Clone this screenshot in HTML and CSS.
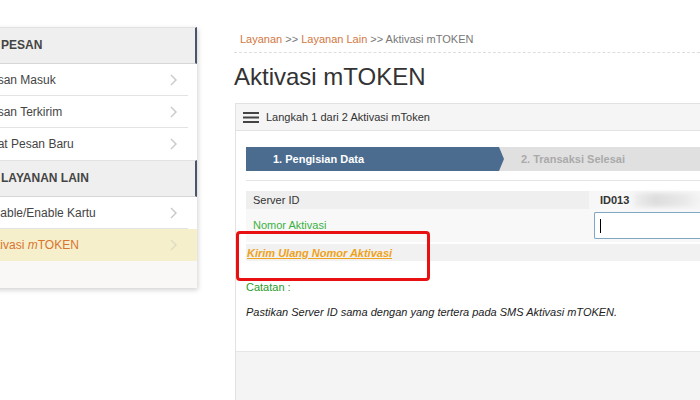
FILE: index.html
```html
<!DOCTYPE html>
<html lang="id">
<head>
    <meta charset="UTF-8">
    <title>Aktivasi mTOKEN</title>
    <link rel="stylesheet" href="styles.css">
</head>
<body>
    <div class="page">
        <div class="sidebar">
            <div class="menu-head">PESAN</div>
            <a class="menu-item" href="#"><span>Pesan Masuk</span><svg class="chev" width="7" height="12" viewBox="0 0 7 12"><path d="M1 1l5 5-5 5" fill="none" stroke="#c8c8c8" stroke-width="1.4"/></svg></a>
            <a class="menu-item" href="#"><span>Pesan Terkirim</span><svg class="chev" width="7" height="12" viewBox="0 0 7 12"><path d="M1 1l5 5-5 5" fill="none" stroke="#c8c8c8" stroke-width="1.4"/></svg></a>
            <a class="menu-item last" href="#"><span>Buat Pesan Baru</span><svg class="chev" width="7" height="12" viewBox="0 0 7 12"><path d="M1 1l5 5-5 5" fill="none" stroke="#c8c8c8" stroke-width="1.4"/></svg></a>
            <div class="menu-head">LAYANAN LAIN</div>
            <a class="menu-item" href="#"><span>Disable/Enable Kartu</span><svg class="chev" width="7" height="12" viewBox="0 0 7 12"><path d="M1 1l5 5-5 5" fill="none" stroke="#c8c8c8" stroke-width="1.4"/></svg></a>
            <a class="menu-item active last" href="#"><span>Aktivasi <i>m</i>TOKEN</span><svg class="chev" width="7" height="12" viewBox="0 0 7 12"><path d="M1 1l5 5-5 5" fill="none" stroke="#e0dcc4" stroke-width="1.4"/></svg></a>
            <div class="menu-foot"></div>
        </div>

        <div class="main">
            <div class="crumb">
                <a href="#">Layanan</a> &gt;&gt; <a href="#">Layanan Lain</a> &gt;&gt; Aktivasi mTOKEN
            </div>
            <h1 class="title">Aktivasi mTOKEN</h1>

            <div class="panel">
                <div class="panel-head">
                    <svg width="16" height="11" viewBox="0 0 16 11"><rect y="0" width="16" height="2" fill="#444"/><rect y="4.5" width="16" height="2" fill="#444"/><rect y="9" width="16" height="2" fill="#444"/></svg>
                    <span>Langkah 1 dari 2 Aktivasi mToken</span>
                </div>
                <div class="panel-body">
                    <div class="steps">
                        <div class="step current">1. Pengisian Data</div>
                        <div class="step">2. Transaksi Selesai</div>
                    </div>
                    <div class="form">
                        <div class="row row-dark">
                            <div class="label">Server ID</div>
                            <div class="value"><b>ID013</b><span class="blur"></span></div>
                        </div>
                        <div class="row row-light">
                            <div class="label green">Nomor Aktivasi</div>
                            <div class="value"><div class="field"><span class="caret"></span></div></div>
                        </div>
                        <div class="row row-link">
                            <a class="resend" href="#">Kirim Ulang Nomor Aktivasi</a>
                        </div>
                    </div>
                    <div class="note-title">Catatan :</div>
                    <div class="note">Pastikan Server ID sama dengan yang tertera pada SMS Aktivasi mTOKEN.</div>
                    <div class="highlight"></div>
                </div>
                <div class="panel-foot"></div>
            </div>
        </div>
    </div>
</body>
</html>
```

FILE: styles.css
```css
html, body {
    margin: 0;
    height: 100%;
    overflow: hidden;
}
body {
    font-family: Arial, "Liberation Sans", sans-serif;
    background-color: #fff;
    color: #333;
}
a {
    text-decoration: none;
}
.page {
    display: flex;
    align-items: flex-start;
}

/* menu kiri */
.sidebar {
    width: 217px;
    margin-left: -20px;
    margin-top: 27px;
    background-color: #fff;
    box-shadow: 1px 2px 5px rgba(0,0,0,0.18);
    display: flex;
    flex-direction: column;
}
.menu-head {
    height: 35px;
    line-height: 35px;
    padding-left: 21px;
    background-color: #efefef;
    border-top: 1px solid #e2e2e2;
    border-bottom: 1px solid #d6d6d6;
    border-right: 2px solid #4a5568;
    font-size: 12px;
    font-weight: bold;
    color: #444;
}
.menu-item {
    display: flex;
    align-items: center;
    justify-content: space-between;
    height: 31px;
    margin-right: 9px;
    padding-left: 3px;
    padding-right: 11px;
    border-bottom: 1px solid #e3e3e3;
    font-size: 12px;
    color: #444;
}
.menu-item.last {
    border-bottom: none;
    height: 32px;
}
.menu-item.active {
    background-color: #f6efcc;
    color: #d9752c;
    margin-right: 0;
    padding-right: 20px;
}
.chev {
    display: block;
}
.menu-foot {
    height: 27px;
    background-color: #faf8f7;
}

/* konten */
.main {
    flex: 1;
    margin-left: 37px;
    min-width: 0;
}
.crumb {
    margin-top: 33px;
    padding-left: 6px;
    padding-bottom: 7px;
    border-bottom: 1px dashed #dedede;
    font-size: 11px;
    color: #777;
}
.crumb a {
    color: #d2773f;
}
.title {
    margin: 10px 0 0 0;
    font-size: 24px;
    font-weight: normal;
    color: #333;
    line-height: 28px;
}
.panel {
    margin-top: 12px;
    margin-left: 1px;
    border: 1px solid #e2e2e2;
    border-right: none;
}
.panel-head {
    display: flex;
    align-items: center;
    gap: 7px;
    height: 26px;
    padding-left: 7px;
    background-color: #f5f5f5;
    border-bottom: 1px solid #e2e2e2;
    font-size: 11px;
    color: #333;
}
.panel-body {
    position: relative;
    padding: 16px 0 0 10px;
    height: 204px;
    background-color: #fff;
    border-bottom: 1px solid #e6e6e6;
}
.steps {
    display: flex;
    height: 24px;
    padding-bottom: 9px;
    border-bottom: 1px solid #e4e4e4;
}
.step {
    flex: 1;
    display: flex;
    align-items: center;
    background-color: #e0e0e0;
    font-size: 11px;
    font-weight: bold;
    color: #aaa;
}
.step.current {
    flex: 0 0 258px;
    padding-left: 27px;
    box-sizing: border-box;
    background-color: #4b6c8f;
    color: #fff;
    clip-path: polygon(0 0, calc(100% - 5px) 0, 100% 50%, calc(100% - 5px) 100%, 0 100%);
    margin-right: -6px;
    position: relative;
    z-index: 1;
}
.step.current + .step {
    padding-left: 23px;
}
.form {
    margin-top: 10px;
}
.row {
    display: flex;
    font-size: 11px;
}
.row-dark {
    height: 18px;
}
.row-dark .label {
    background-color: #efefef;
}
.row-light {
    height: 33px;
    background-color: #f8f8f8;
}
.label {
    flex: 0 0 336px;
    display: flex;
    align-items: center;
    padding-left: 7px;
    color: #333;
}
.label.green {
    color: #3cb043;
    align-items: flex-start;
    padding-top: 10px;
}
.value {
    flex: 1;
    display: flex;
    align-items: center;
    padding-left: 11px;
}
.row-dark .value {
    background-color: #f7f7f7;
    color: #333;
}
.blur {
    display: block;
    width: 70px;
    height: 14px;
    margin-left: 5px;
    background: linear-gradient(90deg, #eee, #ddd 30%, #e8e8e8 70%, #f7f7f7);
    filter: blur(2px);
}
.row-light .value {
    padding-left: 5px;
}
.field {
    flex: 1;
    display: flex;
    align-items: center;
    height: 27px;
    padding-left: 5px;
    box-sizing: border-box;
    border: 1px solid #7fa6c2;
    border-right: none;
    border-radius: 2px 0 0 2px;
    background-color: #fff;
}
.caret {
    display: block;
    width: 1px;
    height: 14px;
    background-color: #000;
}
.row-link {
    height: 17px;
    margin-top: 2px;
    align-items: center;
    background-color: #f1f1f1;
}
.resend {
    padding-left: 1px;
    font-weight: bold;
    font-style: italic;
    text-decoration: underline;
    color: #eea21b;
}
.note-title {
    margin-top: 20px;
    font-size: 11px;
    color: #2a9a2a;
}
.note {
    margin-top: 13px;
    font-size: 11px;
    font-style: italic;
    color: #222;
}
.panel-foot {
    height: 60px;
    background-color: #f4f4f4;
}

/* kotak sorotan merah */
.highlight {
    position: absolute;
    left: 0;
    top: 100px;
    width: 188px;
    height: 44px;
    border: 3px solid #e81010;
    border-radius: 4px;
}
```
